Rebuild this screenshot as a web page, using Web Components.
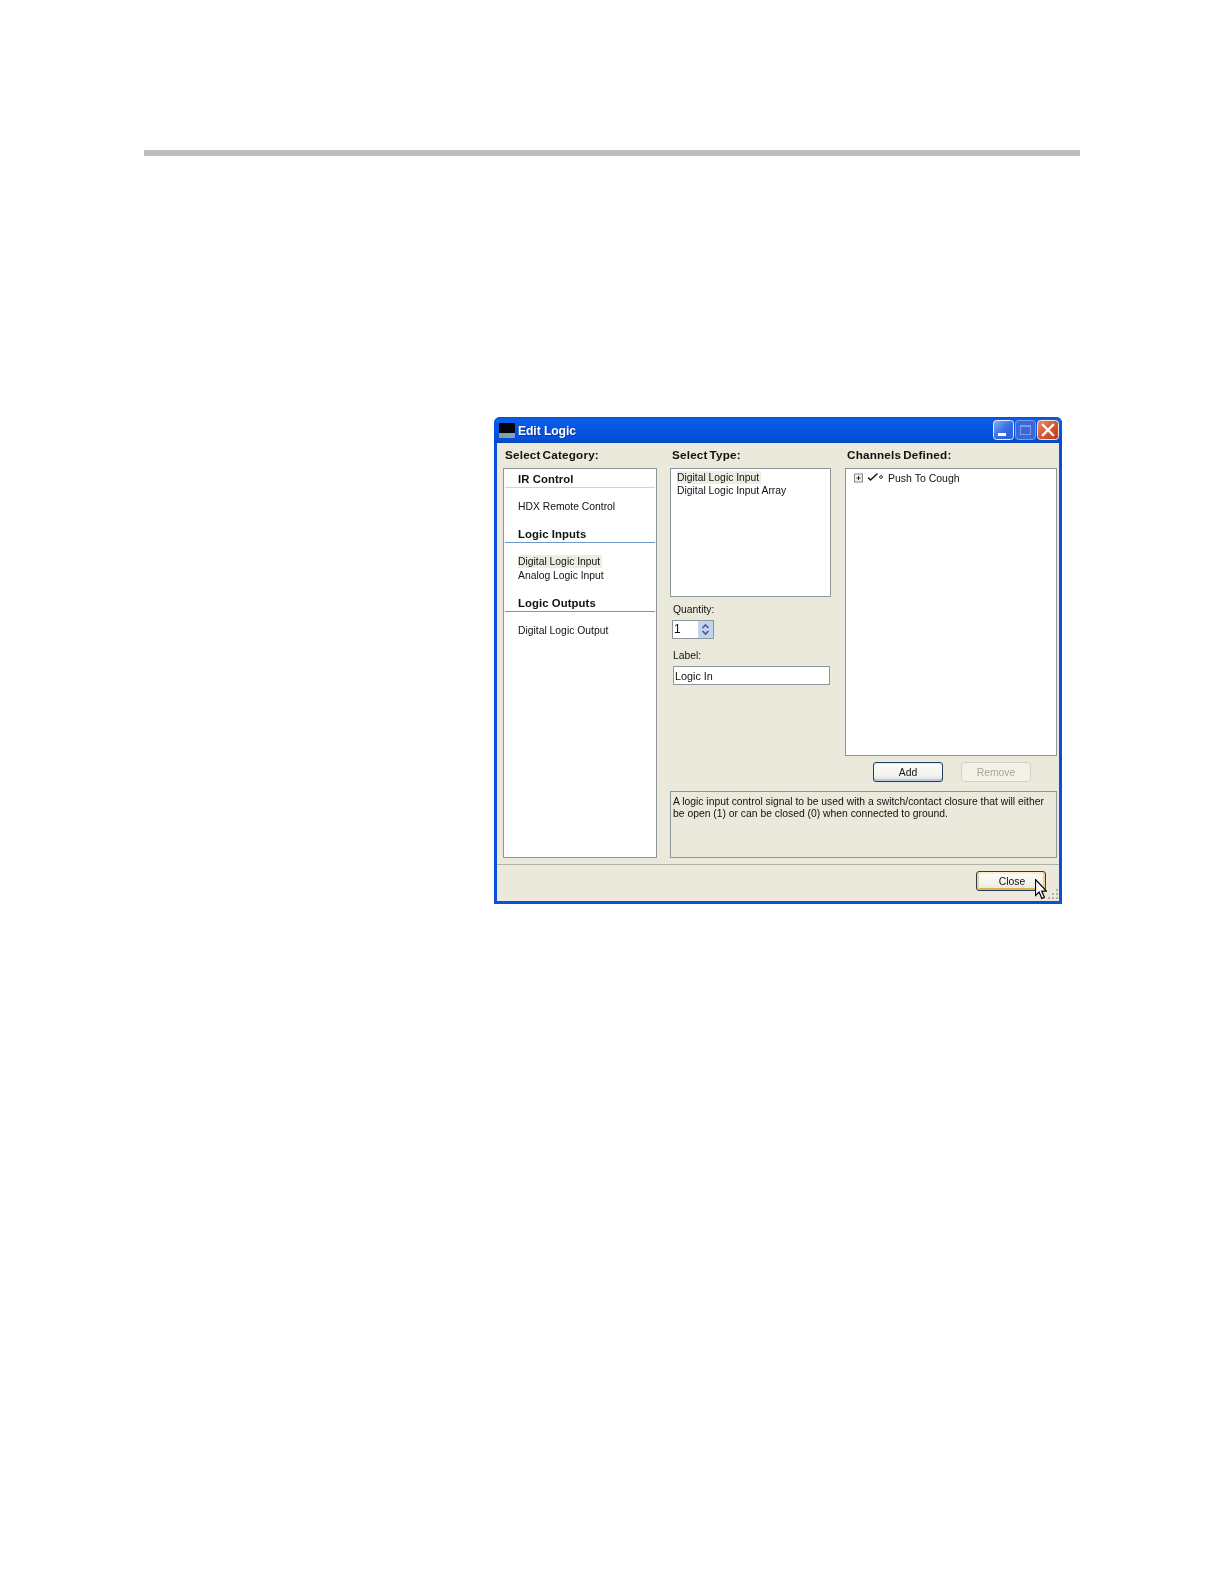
<!DOCTYPE html>
<html>
<head>
<meta charset="utf-8">
<title>Edit Logic</title>
<style>
  html, body { margin: 0; background: #fff; }
  body { font: 10.35px/13px "Liberation Sans", Arial, sans-serif; color: #111; min-height: 1584px; }
</style>
</head>
<body>
<page-rule></page-rule>
<xp-window title="Edit Logic">
  <cat-panel label="Select Category:">
    <cat-section title="IR Control" light><list-item>HDX Remote Control</list-item></cat-section>
    <cat-section title="Logic Inputs"><list-item selected>Digital Logic Input</list-item><list-item>Analog Logic Input</list-item></cat-section>
    <cat-section title="Logic Outputs"><list-item>Digital Logic Output</list-item></cat-section>
  </cat-panel>
  <type-panel label="Select Type:" quantity="1" value="Logic In">
    <list-item selected>Digital Logic Input</list-item>
    <list-item>Digital Logic Input Array</list-item>
  </type-panel>
  <channel-panel label="Channels Defined:">
    <tree-item>Push To Cough</tree-item>
  </channel-panel>
  <desc-box>A logic input control signal to be used with a switch/contact closure that will either<br>be open (1) or can be closed (0) when connected to ground.</desc-box>
  <xp-button slot="footer" kind="default">Close</xp-button>
</xp-window>

<script>
(function () {
  const FACE = '#ebe9dc';
  const LINE = '#8f9699';

  function make(name, css, html, setup) {
    customElements.define(name, class extends HTMLElement {
      connectedCallback() {
        if (this.shadowRoot) return;
        const shadow = this.attachShadow({ mode: 'open' });
        const body = typeof html === 'function' ? html(this) : html;
        shadow.innerHTML = `<style>${css}</style>${body}`;
        if (setup) setup(this, shadow);
      }
    });
  }

  make('page-rule', `:host { display: block; height: 6px; margin: 150px 144px 0; background: #bdbdbd; }`, '');

  make('xp-window', `
    :host { display: block; position: relative; width: 568px; height: 487px; margin: 261px 0 0 494px; box-sizing: border-box;
            background: #0c4fdc; border-radius: 6px 6px 0 0; filter: blur(.3px); }
    .bar { display: flex; align-items: center; height: 26px; padding: 0 3px 0 5px; border-radius: 6px 6px 0 0;
           background: linear-gradient(#0a4fc8 0, #0a5fe6 10%, #0455e2 45%, #0350da 85%, #0a47b8 100%); }
    .bar svg.ico { flex: none; }
    .name { margin-left: 3px; padding-top: 2px; color: #fff; font: bold 12.2px/24px "Liberation Sans", sans-serif; letter-spacing: -.1px; text-shadow: 1px 1px 0 #0a3a9c; flex: 1; }
    .ctl { display: flex; gap: 1px; }
    .ctl svg { display: block; }
    .inner { margin: 0 3px; height: 458px; background: ${FACE}; }
    .main { display: flex; height: 421px; padding-left: 6px; box-sizing: border-box; }
    .right { display: flex; flex-direction: column; margin-left: 13px; width: 387px; }
    .cols { display: flex; gap: 14px; }
    .foot { display: flex; justify-content: flex-end; height: 37px; padding: 6px 13px 0 0; box-sizing: border-box; border-top: 1px solid #b4b2a4; }
    .grip { position: absolute; right: 3px; bottom: 3px; }
    .cursor { position: absolute; left: 541px; top: 462px; }
  `, (el) => `
    <div class="bar">
      <svg class="ico" width="16" height="15" viewBox="0 0 16 15">
        <rect width="16" height="10" y="0" fill="#050510"/>
        <rect width="6" height="5" y="10" fill="#8f9a9a"/>
        <rect width="5" height="5" x="6" y="10" fill="#6fb878"/>
        <rect width="5" height="5" x="11" y="10" fill="#7f9fe0"/>
      </svg>
      <span class="name">${el.getAttribute('title') || ''}</span>
      <div class="ctl">
        <svg width="21" height="20" viewBox="0 0 21 20">
          <defs><linearGradient id="m" x1="0" y1="0" x2="1" y2="1"><stop offset="0" stop-color="#8fb0f4"/><stop offset=".5" stop-color="#3a6ee6"/><stop offset="1" stop-color="#2a58d4"/></linearGradient></defs>
          <rect x=".5" y=".5" width="20" height="19" rx="3" fill="url(#m)" stroke="#e4ecfb"/>
          <rect x="5" y="13" width="8" height="3" fill="#fff"/>
        </svg>
        <svg width="21" height="20" viewBox="0 0 21 20">
          <rect x=".5" y=".5" width="20" height="19" rx="3" fill="#3a68dc" stroke="#7c9ee8"/>
          <rect x="5.5" y="5.5" width="10" height="9" fill="none" stroke="#7c9ee8"/>
          <rect x="5" y="5" width="11" height="2" fill="#7c9ee8"/>
        </svg>
        <svg width="22" height="20" viewBox="0 0 22 20">
          <defs><linearGradient id="c" x1="0" y1="0" x2="1" y2="1"><stop offset="0" stop-color="#e8936f"/><stop offset=".5" stop-color="#d9552f"/><stop offset="1" stop-color="#b83c1c"/></linearGradient></defs>
          <rect x=".5" y=".5" width="21" height="19" rx="3" fill="url(#c)" stroke="#f0e4e0"/>
          <path d="M6 5 L16 15 M16 5 L6 15" stroke="#fff" stroke-width="2.4" stroke-linecap="square"/>
        </svg>
      </div>
    </div>
    <div class="inner">
      <div class="main">
        <slot name="left"></slot>
        <div class="right">
          <div class="cols"><slot name="types"></slot><slot name="channels"></slot></div>
          <slot name="desc"></slot>
        </div>
      </div>
      <div class="foot"><slot name="footer"></slot></div>
    </div>
    <svg class="grip" width="13" height="13" viewBox="0 0 13 13" fill="#b4b2a4">
      <rect x="10" y="1" width="2" height="2"/><rect x="6" y="5" width="2" height="2"/><rect x="10" y="5" width="2" height="2"/>
      <rect x="2" y="9" width="2" height="2"/><rect x="6" y="9" width="2" height="2"/><rect x="10" y="9" width="2" height="2"/>
    </svg>
    <svg class="cursor" width="12" height="21" viewBox="0 0 12 21">
      <path d="M.5 .5 V16.5 L4.2 13 L6.8 19.5 L9.4 18.4 L6.8 12.2 H11.5 Z" fill="#fff" stroke="#000" stroke-width="1.2"/>
    </svg>
  `, (el) => {
    el.querySelector('cat-panel').slot = 'left';
    el.querySelector('type-panel').slot = 'types';
    el.querySelector('channel-panel').slot = 'channels';
    el.querySelector('desc-box').slot = 'desc';
  });

  const HEAD = `font: bold 11.7px/23px "Liberation Sans", sans-serif; letter-spacing: .2px; word-spacing: -1.5px; color: #111;`;
  const BOX = `box-sizing: border-box; border: 1px solid ${LINE}; background: #fff;`;

  make('cat-panel', `
    :host { display: block; width: 154px; flex: none; }
    .head { ${HEAD} height: 25px; padding-left: 2px; }
    .box { ${BOX} height: 390px; padding: 0 1px; }
  `, (el) => `<div class="head">${el.getAttribute('label')}</div><div class="box"><slot></slot></div>`);

  make('cat-section', `
    :host { display: block; }
    .t { box-sizing: border-box; height: 19px; padding-left: 13px; font: bold 11.3px/21px "Liberation Sans", sans-serif; letter-spacing: .1px; color: #111; border-bottom: 1px solid #6f9bc8; }
    :host([light]) .t { border-bottom-color: #c6d6e6; }
    .i { padding: 12px 0 10px 13px; }
  `, (el) => `<div class="t">${el.getAttribute('title')}</div><div class="i"><slot></slot></div>`);

  make('list-item', `
    :host { display: block; height: 14px; line-height: 13px; }
    span { display: inline-block; padding: 0 2px 0 0; }
    :host([selected]) span { background: #efece2; }
  `, `<span><slot></slot></span>`);

  make('type-panel', `
    :host { display: block; width: 161px; flex: none; }
    .head { ${HEAD} height: 25px; padding-left: 2px; }
    .box { ${BOX} height: 129px; padding: 2px 6px; }
    ::slotted(list-item) { height: 13px; }
    .lbl { height: 14px; line-height: 14px; padding-left: 3px; }
    .q { margin-top: 6px; }
    .l { margin-top: 10px; }
    .spin { ${BOX} display: flex; justify-content: space-between; width: 42px; height: 19px; margin: 3px 0 0 2px; padding: 0 0 0 1px; font-size: 12px; line-height: 17px; }
    .spin svg { display: block; }
    .field { ${BOX} width: 157px; height: 19px; margin: 3px 0 0 3px; padding-left: 1px; font-size: 10.8px; line-height: 18px; }
  `, (el) => `
    <div class="head">${el.getAttribute('label')}</div>
    <div class="box"><slot></slot></div>
    <div class="lbl q">Quantity:</div>
    <div class="spin"><span>${el.getAttribute('quantity')}</span>
      <svg width="15" height="17" viewBox="0 0 15 17">
        <rect width="15" height="17" fill="#c4d3f3"/>
        <path d="M4.5 7 L7.5 4 L10.5 7 M4.5 10 L7.5 13 L10.5 10" fill="none" stroke="#4d6185" stroke-width="1.7"/>
      </svg>
    </div>
    <div class="lbl l">Label:</div>
    <div class="field">${el.getAttribute('value')}</div>
  `);

  make('channel-panel', `
    :host { display: block; width: 212px; flex: none; }
    .head { ${HEAD} height: 25px; padding-left: 2px; }
    .box { ${BOX} height: 288px; padding: 2px 0 0 8px; }
    .btns { display: flex; gap: 18px; margin-top: 6px; padding-left: 28px; }
  `, (el) => `
    <div class="head">${el.getAttribute('label')}</div>
    <div class="box"><slot></slot></div>
    <div class="btns"><xp-button>Add</xp-button><xp-button disabled>Remove</xp-button></div>
  `);

  make('tree-item', `
    :host { display: flex; align-items: center; height: 14px; font-size: 10.5px; }
    svg { flex: none; display: block; }
    .txt { margin-left: 3px; }
  `, `
    <svg width="31" height="14" viewBox="0 0 31 14">
      <rect x=".5" y="3" width="8" height="8" fill="#f1f1ea" stroke="#888"/>
      <path d="M2.5 7 H6.5 M4.5 5 V9" stroke="#222"/>
      <path d="M14 6.5 L16.5 9 L23.5 2.5" fill="none" stroke="#111" stroke-width="1.4"/>
      <circle cx="27" cy="6" r="1.4" fill="#fff" stroke="#333"/>
    </svg>
    <span class="txt"><slot></slot></span>
  `);

  make('desc-box', `
    :host { display: block; box-sizing: border-box; height: 67px; margin-top: 9px; border: 1px solid ${LINE}; padding: 4px 0 0 2px; line-height: 12px; white-space: nowrap; }
  `, `<slot></slot>`);

  make('xp-button', `
    :host { display: block; box-sizing: border-box; width: 70px; height: 20px; border: 1px solid #1f3f5c; border-radius: 3px; text-align: center; line-height: 19px;
            background: linear-gradient(#fdfdfb, #f2f1ea 70%, #dfe3ea); box-shadow: inset 0 -2px 0 #b8cbe6, inset 0 1px 0 #dce8f6; }
    :host([kind=default]) { box-shadow: inset 2px 0 0 #f6cf85, inset -2px 0 0 #f6cf85, inset 0 -2px 0 #e8ae4a, inset 0 2px 0 #fdeec8; padding-left: 2px; }
    :host([disabled]) { border-color: #d3d1c3; background: #f3f1e8; box-shadow: none; color: #a6a69a; }
  `, `<slot></slot>`);
})();
</script>
</body>
</html>
